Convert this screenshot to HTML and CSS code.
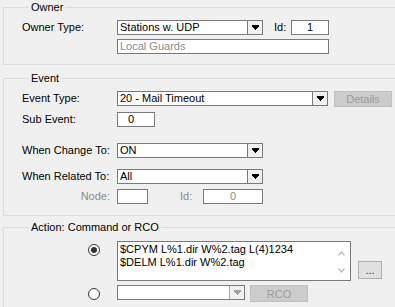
FILE: index.html
```html
<!DOCTYPE html>
<html lang="en">
<head>
  <meta charset="UTF-8" />
  <title>Event Action</title>
  <link rel="stylesheet" href="styles.css">
</head>
<body>

  <fieldset class="group owner">
    <legend>Owner</legend>
    <div class="row">
      <span class="lbl">Owner Type:</span>
      <div class="combo w146">
        <span class="val">Stations w. UDP</span>
        <span class="drop"><svg width="7" height="5"><rect x="0" y="0" width="7" height="2"/><rect x="1" y="2" width="5" height="1"/><rect x="2" y="3" width="3" height="1"/><rect x="3" y="4" width="1" height="1"/></svg></span>
      </div>
      <span class="lbl-id">Id:</span>
      <div class="box w38 center">1</div>
    </div>
    <div class="row gap4">
      <span class="lbl"></span>
      <div class="box w212 dim">Local Guards</div>
    </div>
  </fieldset>

  <fieldset class="group event">
    <legend>Event</legend>
    <div class="row">
      <span class="lbl">Event Type:</span>
      <div class="combo w211">
        <span class="val">20 - Mail Timeout</span>
        <span class="drop"><svg width="7" height="5"><rect x="0" y="0" width="7" height="2"/><rect x="1" y="2" width="5" height="1"/><rect x="2" y="3" width="3" height="1"/><rect x="3" y="4" width="1" height="1"/></svg></span>
      </div>
      <button class="btn off details">Details</button>
    </div>
    <div class="row gap6">
      <span class="lbl">Sub Event:</span>
      <div class="box w38 indent">0</div>
    </div>
    <div class="row gap16">
      <span class="lbl">When Change To:</span>
      <div class="combo w146">
        <span class="val">ON</span>
        <span class="drop"><svg width="7" height="5"><rect x="0" y="0" width="7" height="2"/><rect x="1" y="2" width="5" height="1"/><rect x="2" y="3" width="3" height="1"/><rect x="3" y="4" width="1" height="1"/></svg></span>
      </div>
    </div>
    <div class="row gap11">
      <span class="lbl">When Related To:</span>
      <div class="combo w146">
        <span class="val">All</span>
        <span class="drop"><svg width="7" height="5"><rect x="0" y="0" width="7" height="2"/><rect x="1" y="2" width="5" height="1"/><rect x="2" y="3" width="3" height="1"/><rect x="3" y="4" width="1" height="1"/></svg></span>
      </div>
    </div>
    <div class="row gap5">
      <span class="lbl right dim">Node:</span>
      <div class="box w31"></div>
      <span class="lbl-node-id dim">Id:</span>
      <div class="box w60 center dim">0</div>
    </div>
  </fieldset>

  <fieldset class="group action">
    <legend>Action: Command or RCO</legend>
    <div class="row cmd-row">
      <span class="radio-cell"><span class="radio checked"></span></span>
      <div class="memo">
        <div class="memo-text">$CPYM L%1.dir W%2.tag L(4)1234<br>$DELM L%1.dir W%2.tag</div>
        <div class="memo-scroll">
          <svg width="7" height="5"><polyline points="0.5,4.5 3.5,1 6.5,4.5" fill="none" stroke="#bdbdbd" stroke-width="1.3"/></svg>
          <svg width="7" height="5"><polyline points="0.5,0.5 3.5,4 6.5,0.5" fill="none" stroke="#bdbdbd" stroke-width="1.3"/></svg>
        </div>
      </div>
      <button class="btn more">...</button>
    </div>
    <div class="row gap4">
      <span class="radio-cell"><span class="radio"></span></span>
      <div class="combo w128">
        <span class="val"></span>
        <span class="drop off"><svg width="7" height="5"><rect x="0" y="0" width="7" height="2"/><rect x="1" y="2" width="5" height="1"/><rect x="2" y="3" width="3" height="1"/><rect x="3" y="4" width="1" height="1"/></svg></span>
      </div>
      <button class="btn off rco">RCO</button>
    </div>
  </fieldset>

</body>
</html>
```

FILE: styles.css
```css
* {
  box-sizing: border-box;
}

body {
  margin: 0;
  background: #f0f0f0;
  color: #000;
  font-family: 'Liberation Sans', Arial, sans-serif;
  font-size: 11px;
  overflow: hidden;
}

.group {
  margin: 0 0 0 3px;
  padding: 6px 0 10px 18px;
  border: 1px solid #dcdcdc;
  border-right: none;
  min-width: 0;
}

.group legend {
  margin-left: 7px;
  padding: 0 2px;
  line-height: 13px;
}

.owner {
  margin-top: 1px;
}

.event {
  margin-top: 7px;
  padding-bottom: 11px;
}

.action {
  margin-top: 5px;
  padding-top: 7px;
}

.row {
  display: flex;
  align-items: flex-start;
  height: 15px;
}

.gap4 { margin-top: 4px; }
.gap5 { margin-top: 5px; }
.gap6 { margin-top: 6px; }
.gap11 { margin-top: 11px; }
.gap16 { margin-top: 16px; }

.lbl {
  width: 95px;
  flex: none;
  line-height: 15px;
}

.lbl.right {
  text-align: right;
  padding-right: 7px;
}

.lbl-id {
  margin: 0 0 0 11px;
  width: 17px;
  line-height: 15px;
}

.lbl-node-id {
  margin-left: 32px;
  width: 23px;
  line-height: 15px;
}

.dim {
  color: #8c8c8c;
}

.box,
.combo {
  height: 15px;
  border: 1px solid #7a7a7a;
  background: #fff;
  line-height: 13px;
  flex: none;
}

.box {
  padding-left: 2px;
}

.box.center {
  text-align: center;
  padding-left: 0;
}

.box.indent {
  padding-left: 10px;
}

.w31 { width: 31px; }
.w38 { width: 38px; }
.w60 { width: 60px; }
.w128 { width: 128px; }
.w146 { width: 146px; }
.w211 { width: 211px; }
.w212 { width: 212px; }

.combo {
  display: flex;
}

.combo .val {
  flex: 1;
  padding-left: 2px;
  white-space: nowrap;
  overflow: hidden;
}

.combo .drop {
  width: 15px;
  border-left: 1px solid #7a7a7a;
  background: #f0f0f0;
  display: flex;
  align-items: center;
  justify-content: center;
}

.combo .drop svg {
  fill: #000;
}

.combo .drop.off {
  border-left-color: #a8a8a8;
}

.combo .drop.off svg {
  fill: #a0a0a0;
}

.btn {
  font: inherit;
  padding: 0;
  flex: none;
}

.btn.off {
  background: #cccccc;
  border: 1px solid #bfbfbf;
  color: #9c9c9c;
}

.details {
  margin-left: 6px;
  width: 58px;
  height: 16px;
}

.rco {
  margin-left: 5px;
  width: 58px;
  height: 17px;
}

.cmd-row {
  height: 40px;
}

.radio-cell {
  width: 95px;
  flex: none;
  padding: 3px 0 0 66px;
}

.radio {
  display: block;
  width: 12px;
  height: 12px;
  border: 1px solid #333;
  border-radius: 50%;
  background: #fff;
  position: relative;
}

.radio.checked::after {
  content: "";
  position: absolute;
  left: 2px;
  top: 2px;
  width: 6px;
  height: 6px;
  border-radius: 50%;
  background: #333;
}

.memo {
  width: 234px;
  height: 40px;
  border: 1px solid #7a7a7a;
  background: #fff;
  display: flex;
  flex: none;
}

.memo-text {
  flex: 1;
  padding: 1px 0 0 2px;
  line-height: 13px;
  white-space: nowrap;
}

.memo-scroll {
  width: 17px;
  display: flex;
  flex-direction: column;
  justify-content: space-between;
  align-items: center;
  padding: 9px 0 7px;
}

.more {
  margin: 20px 0 0 7px;
  width: 24px;
  height: 18px;
  background: #e1e1e1;
  border: 1px solid #adadad;
  color: #333;
  line-height: 12px;
}
```
